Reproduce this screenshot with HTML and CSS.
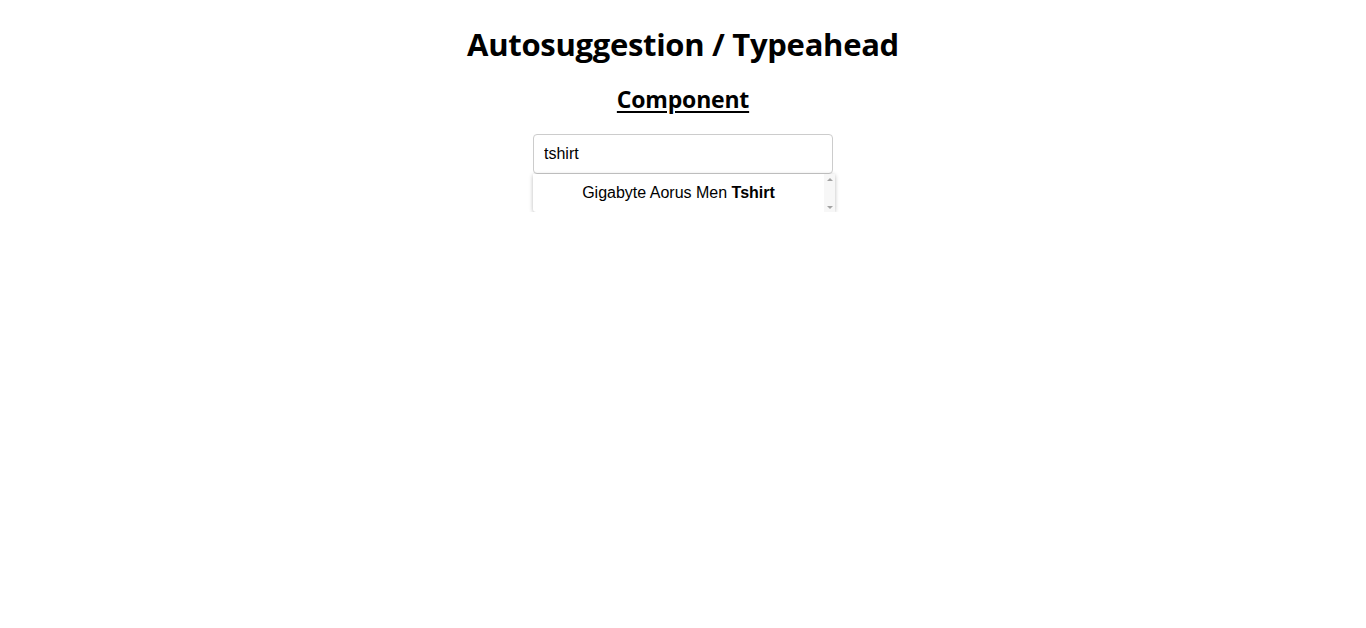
FILE: index.html
```html
<!DOCTYPE html>
<html>
<head>
<meta charset="utf-8">
<link rel="stylesheet" href="styles.css">
</head>
<body>
<div class="app">
  <h1 class="title">Autosuggestion / Typeahead</h1>
  <h2 class="subtitle">Component</h2>
  <div class="search">
    <input class="search-input" type="text" value="tshirt">
    <div class="suggestions">
      <ul class="suggestion-list">
        <li class="suggestion">Gigabyte Aorus Men <b>Tshirt</b></li>
      </ul>
      <div class="scrollbar">
        <span class="arrow arrow-up"></span>
        <span class="arrow arrow-down"></span>
      </div>
    </div>
  </div>
</div>
</body>
</html>
```

FILE: styles.css
```css
html, body {
  margin: 0;
  padding: 0;
  background: #fff;
}
body {
  padding-top: 1px;
}
.app {
  display: flex;
  flex-direction: column;
  align-items: center;
  font-family: "Open Sans", "Noto Sans", sans-serif;
  color: #000;
}
.title {
  font-size: 31px;
  font-weight: 700;
  margin: 21px 0 0;
  line-height: 44px;
  letter-spacing: -0.3px;
}
.subtitle {
  font-size: 23px;
  font-weight: 700;
  margin: 18px 0 0;
  line-height: 30px;
  text-decoration: underline;
  text-underline-offset: 3px;
  letter-spacing: -0.2px;
}
.search {
  margin-top: 20px;
  width: 300px;
  display: flex;
  flex-direction: column;
  align-items: flex-start;
}
.search-input {
  display: block;
  box-sizing: border-box;
  width: 300px;
  height: 40px;
  margin: 0;
  padding: 0 10px;
  border: 1px solid #ccc;
  border-radius: 4px;
  font-family: "Liberation Sans", Arial, sans-serif;
  font-size: 16px;
  color: #000;
  outline: none;
}
.suggestions {
  display: flex;
  width: 302px;
  height: 38px;
  background: #fff;
  box-shadow: 0 1px 4px rgba(0,0,0,0.28);
  border-radius: 0 0 3px 3px;
}
.suggestion-list {
  flex: 1;
  list-style: none;
  margin: 0;
  padding: 0;
}
.suggestion {
  font-family: "Liberation Sans", Arial, sans-serif;
  font-size: 16px;
  line-height: 38px;
  text-align: center;
}
.scrollbar {
  width: 11px;
  background: #f7f7f7;
  display: flex;
  flex-direction: column;
  justify-content: space-between;
  align-items: center;
  padding: 4px 0 3px;
  box-sizing: border-box;
}
.arrow {
  width: 0;
  height: 0;
  border-left: 3px solid transparent;
  border-right: 3px solid transparent;
}
.arrow-up {
  border-bottom: 3px solid #a3a3a3;
}
.arrow-down {
  border-top: 3px solid #a3a3a3;
}
```
